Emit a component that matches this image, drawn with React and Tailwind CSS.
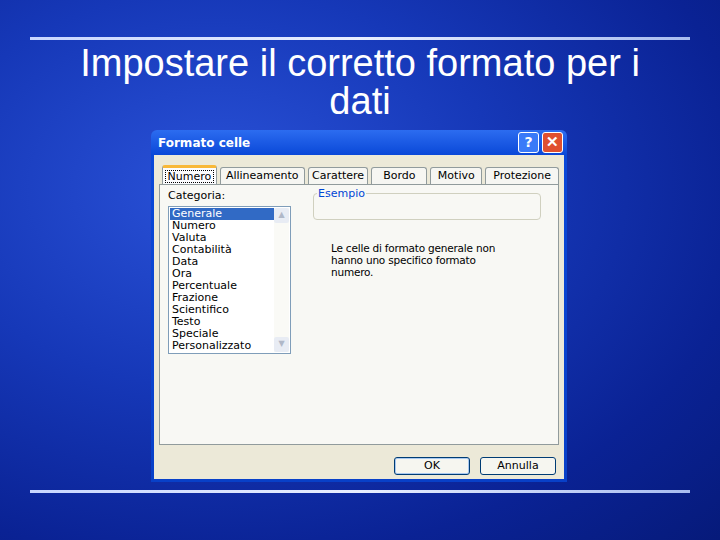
export default function App() {
  const cats = ["Generale","Numero","Valuta","Contabilità","Data","Ora","Percentuale","Frazione","Scientifico","Testo","Speciale","Personalizzato"];
  const tabs = [["Allineamento",85],["Carattere",61],["Bordo",56],["Motivo",52],["Protezione",74]];
  const f = { fontFamily: "Tahoma, 'DejaVu Sans', sans-serif" };
  return (
    <div className="w-[720px] h-[540px] overflow-hidden flex flex-col" style={{ fontFamily: "'Liberation Sans', Arial, sans-serif", background: "radial-gradient(ellipse at 30% 35%, #2a52d8 0%, #1638b8 40%, #0a2294 75%, #061a7a 100%)" }}>
      <div className="mt-[37px] mx-[30px] h-[3px] bg-gradient-to-r from-[#c8d6ff] via-[#e8eeff] to-[#a8bcf0]" />
      <div className="text-white text-[38px] leading-[38px] text-center mt-[4px] h-[86px] w-[620px] mx-auto">Impostare il corretto formato per i dati</div>
      <div className="flex pl-[151px]">
        <div className="w-[416px] h-[352px] rounded-t-[6px] flex flex-col px-[3px] pb-[3px]" style={{ background: "linear-gradient(#2c6cf0,#0a48d8 25px,#0840c8)" }}>
          <div className="h-[25px] flex items-center justify-between pl-[4px] pr-[1px]">
            <span className="text-white font-bold text-[12px]" style={f}>Formato celle</span>
            <div className="flex gap-[3px]">
              <div className="w-[21px] h-[21px] rounded-[3px] border border-white bg-[#3a7af8] text-white font-bold text-[14px] flex items-center justify-center" style={f}>?</div>
              <div className="w-[21px] h-[21px] rounded-[3px] border border-white bg-[#e05030] text-white font-bold text-[15px] flex items-center justify-center">✕</div>
            </div>
          </div>
          <div className="flex-1 bg-[#ece9d8] flex flex-col px-[5px] pt-[10px] text-[11px] text-black" style={f}>
            <div className="flex items-end h-[19px] pl-[3px]">
              <div className="h-[19px] w-[55px] bg-[#fcfcfe] border border-[#919b9c] border-b-0 border-t-[3px] border-t-[#f8b838] rounded-t-[3px] flex items-center justify-center">
                <span className="border border-dotted border-black px-[2px] leading-[11px]">Numero</span>
              </div>
              {tabs.map(([t, w]) => (
                <div key={t} style={{ width: w }} className="h-[17px] ml-[3px] bg-[#f6f6f2] border border-[#919b9c] border-b-0 rounded-t-[3px] flex items-center justify-center">{t}</div>
              ))}
            </div>
            <div className="h-[261px] bg-[#f8f8f4] border border-[#919b9c] flex px-[8px] pt-[3px]">
              <div className="flex flex-col">
                <div className="mb-[1px]">Categoria:</div>
                <div className="w-[123px] h-[148px] bg-white border border-[#7f9db9] flex p-[1px]">
                  <div className="flex-1 leading-[12px]">
                    {cats.map((c, i) => (
                      <div key={c} className={i === 0 ? "bg-[#316ac5] text-white pl-[2px]" : "pl-[2px]"}>{c}</div>
                    ))}
                  </div>
                  <div className="w-[15px] flex flex-col justify-between bg-[#fafaf6]">
                    <div className="h-[15px] bg-[#e8ecf4] rounded-[2px] text-[#b0b8c8] text-[8px] flex items-center justify-center">▲</div>
                    <div className="h-[15px] bg-[#e8ecf4] rounded-[2px] text-[#b0b8c8] text-[8px] flex items-center justify-center">▼</div>
                  </div>
                </div>
              </div>
              <div className="flex flex-col ml-[22px] w-[228px]">
                <div className="relative mt-[5px] h-[27px] border border-[#d0d0bf] rounded-[4px]">
                  <span className="absolute -top-[8px] left-[3px] bg-[#f8f8f4] px-[1px] text-[#0046d5]">Esempio</span>
                </div>
                <div className="mt-[22px] ml-[18px] w-[176px] text-[10.5px] tracking-[-0.2px] leading-[12px]">Le celle di formato generale non hanno uno specifico formato numero.</div>
              </div>
            </div>
            <div className="flex justify-end gap-[10px] mt-[12px] pr-[3px]">
              <div className="w-[76px] h-[18px] bg-[#f6f6f0] border border-[#003c74] rounded-[3px] shadow-[inset_0_0_0_1px_#a8c8f0] flex items-center justify-center">OK</div>
              <div className="w-[76px] h-[18px] bg-[#f6f6f0] border border-[#003c74] rounded-[3px] flex items-center justify-center">Annulla</div>
            </div>
          </div>
        </div>
      </div>
      <div className="mt-[8px] mx-[30px] h-[3px] bg-gradient-to-r from-[#c8d6ff] via-[#e8eeff] to-[#a8bcf0]" />
    </div>
  );
}
